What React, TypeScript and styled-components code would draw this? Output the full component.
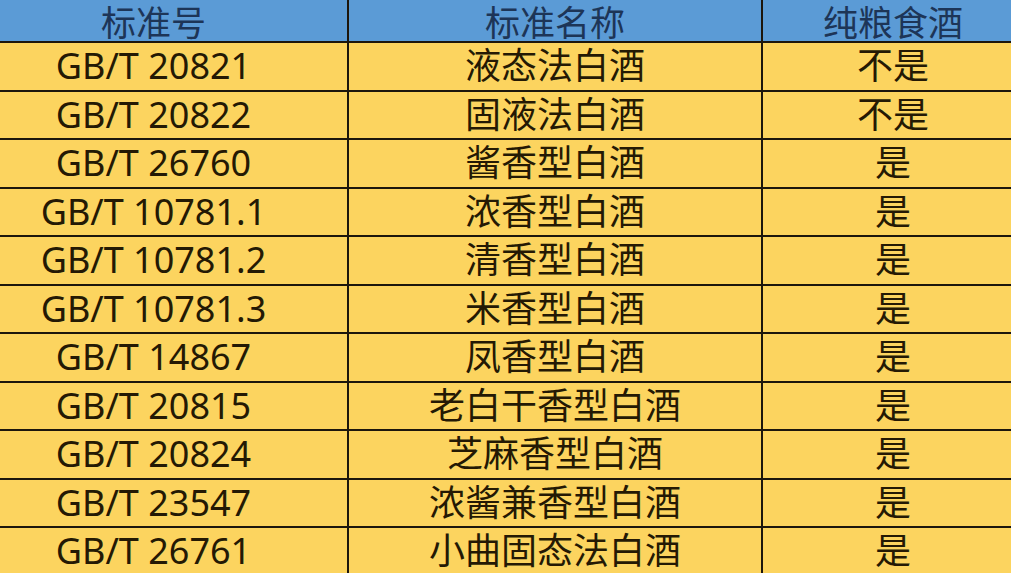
import * as React from "react";
import styled, { createGlobalStyle } from "styled-components";

const GlobalStyle = createGlobalStyle`
    html, body {
        margin: 0;
        padding: 0;
        background: #fcd45f;
        overflow: hidden;
    }
    body {
        font-family: "Noto Sans", "Noto Sans CJK SC", sans-serif;
    }
`;

const Sheet = styled.div`
    width: 1011px;
    height: 573px;
    overflow: hidden;
    background: #fcd45f;
`;

const Row = styled.div<{ $header?: boolean }>`
    display: grid;
    grid-template-columns: 349px 414px 1fr;
    height: ${(p) => (p.$header ? "41px" : "46.5px")};
    border-bottom: 2px solid #1c160c;
    background: ${(p) => (p.$header ? "#5b9bd6" : "#fcd45f")};
    color: ${(p) => (p.$header ? "#1d3557" : "#241904")};
`;

const Cell = styled.div<{ $shift?: number; $last?: boolean; $header?: boolean }>`
    display: flex;
    align-items: ${(p) => (p.$header ? "flex-end" : "center")};
    justify-content: center;
    padding-bottom: ${(p) => (p.$header ? "1px" : "0")};
    padding-left: ${(p) => Math.max(p.$shift ?? 0, 0)}px;
    padding-right: ${(p) => Math.max(-(p.$shift ?? 0), 0)}px;
    border-right: ${(p) => (p.$last ? "none" : "2px solid #1c160c")};
    font-size: ${(p) => (p.$header ? "35px" : "36px")};
    line-height: 1;
    white-space: nowrap;
    overflow: visible;
`;

const rows: [string, string, string][] = [
    ["GB/T 20821", "液态法白酒", "不是"],
    ["GB/T 20822", "固液法白酒", "不是"],
    ["GB/T 26760", "酱香型白酒", "是"],
    ["GB/T 10781.1", "浓香型白酒", "是"],
    ["GB/T 10781.2", "清香型白酒", "是"],
    ["GB/T 10781.3", "米香型白酒", "是"],
    ["GB/T 14867", "凤香型白酒", "是"],
    ["GB/T 20815", "老白干香型白酒", "是"],
    ["GB/T 20824", "芝麻香型白酒", "是"],
    ["GB/T 23547", "浓酱兼香型白酒", "是"],
    ["GB/T 26761", "小曲固态法白酒", "是"],
];

export default function App() {
    return (
        <>
            <GlobalStyle />
            <Sheet>
                <Row $header>
                    <Cell $header $shift={-40}>标准号</Cell>
                    <Cell $header>标准名称</Cell>
                    <Cell $header $last $shift={12}>纯粮食酒</Cell>
                </Row>
                {rows.map((r, i) => (
                    <Row key={i}>
                        <Cell $shift={-40}>{r[0]}</Cell>
                        <Cell>{r[1]}</Cell>
                        <Cell $last $shift={12}>{r[2]}</Cell>
                    </Row>
                ))}
            </Sheet>
        </>
    );
}
